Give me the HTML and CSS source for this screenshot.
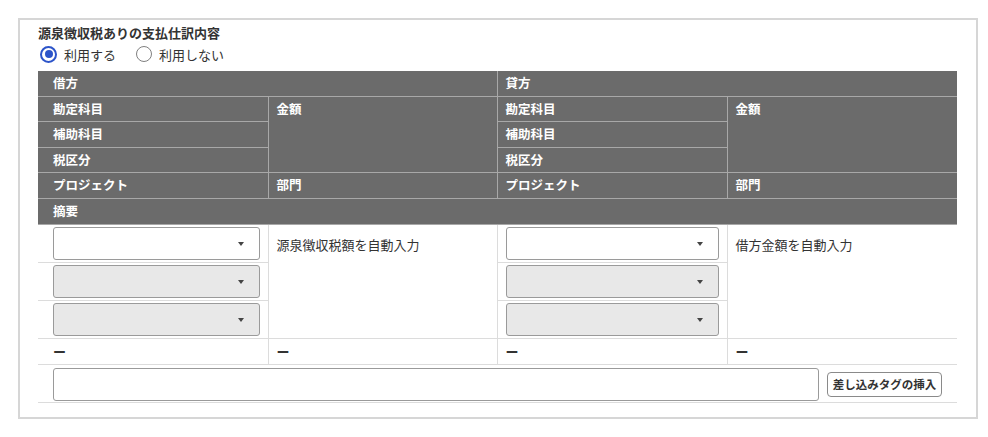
FILE: index.html
```html
<!DOCTYPE html>
<html lang="ja">
<head>
  <meta charset="UTF-8">
  <title>源泉徴収税ありの支払仕訳内容</title>
  <link rel="stylesheet" href="styles.css">
</head>
<body>
  <div class="panel">
    <div class="title">源泉徴収税ありの支払仕訳内容</div>
    <div class="radios">
      <label class="radio-item"><span class="radio checked"></span>利用する</label>
      <label class="radio-item"><span class="radio"></span>利用しない</label>
    </div>

    <table class="journal">
      <colgroup>
        <col style="width:230px">
        <col style="width:229px">
        <col style="width:230px">
        <col style="width:230px">
      </colgroup>
      <thead>
        <tr>
          <th colspan="2" class="first">借方</th>
          <th colspan="2" class="side">貸方</th>
        </tr>
        <tr>
          <th class="first">勘定科目</th>
          <th rowspan="3" class="side">金額</th>
          <th class="side">勘定科目</th>
          <th rowspan="3" class="side">金額</th>
        </tr>
        <tr>
          <th class="first">補助科目</th>
          <th class="side">補助科目</th>
        </tr>
        <tr>
          <th class="first">税区分</th>
          <th class="side">税区分</th>
        </tr>
        <tr>
          <th class="first">プロジェクト</th>
          <th class="side">部門</th>
          <th class="side">プロジェクト</th>
          <th class="side">部門</th>
        </tr>
        <tr>
          <th colspan="4" class="first">摘要</th>
        </tr>
      </thead>
      <tbody>
        <tr>
          <td class="first sel"><div class="select"></div></td>
          <td rowspan="3" class="side auto">源泉徴収税額を自動入力</td>
          <td class="side sel"><div class="select"></div></td>
          <td rowspan="3" class="side auto">借方金額を自動入力</td>
        </tr>
        <tr>
          <td class="first sel"><div class="select disabled"></div></td>
          <td class="side sel"><div class="select disabled"></div></td>
        </tr>
        <tr>
          <td class="first sel"><div class="select disabled"></div></td>
          <td class="side sel"><div class="select disabled"></div></td>
        </tr>
        <tr class="dash-row">
          <td class="first">ー</td>
          <td class="side">ー</td>
          <td class="side">ー</td>
          <td class="side">ー</td>
        </tr>
        <tr>
          <td colspan="4" class="memo">
            <div class="memo-line">
              <input type="text" class="memo-input">
              <button class="tag-btn">差し込みタグの挿入</button>
            </div>
          </td>
        </tr>
      </tbody>
    </table>
  </div>
</body>
</html>
```

FILE: styles.css
```css
body {
  margin: 0;
  padding: 18px 0 0 18px;
  font-family: "Noto Sans CJK JP", "Noto Sans", sans-serif;
  color: #333;
  background: #fff;
}
.panel {
  width: 922px;
  height: 376px;
  border: 2px solid #d6d6d6;
  padding: 3px 16px 18px 18px;
}
.title {
  font-size: 13px;
  font-weight: bold;
  line-height: 20px;
}
.radios {
  display: flex;
  align-items: center;
  gap: 18px;
  height: 22px;
  margin-bottom: 6px;
  font-size: 13px;
}
.radio-item {
  display: flex;
  align-items: center;
  gap: 7px;
  padding-left: 2px;
}
.radio {
  width: 14px;
  height: 14px;
  border: 1.5px solid #808080;
  border-radius: 50%;
  position: relative;
}
.radio.checked {
  border: 2px solid #2c54c9;
  width: 13px;
  height: 13px;
}
.radio.checked::after {
  content: "";
  position: absolute;
  left: 2.5px;
  top: 2.5px;
  width: 8px;
  height: 8px;
  border-radius: 50%;
  background: #2c54c9;
}
.journal {
  width: 919px;
  border-collapse: collapse;
  table-layout: fixed;
  font-size: 12.5px;
}
.journal th {
  background: #6b6b6b;
  color: #fff;
  font-weight: bold;
  text-align: left;
  vertical-align: top;
  height: 24.6px;
  line-height: 24px;
  padding: 0 8px;
  border-bottom: 1px solid #a8a8a8;
}
.journal th.side {
  border-left: 1px solid #a8a8a8;
}
.journal .first {
  padding-left: 15px;
}
.journal td {
  padding: 2px 8px;
  border-bottom: 1px solid #dcdcdc;
  vertical-align: top;
}
.journal td.side {
  border-left: 1px solid #dcdcdc;
}
.journal td.first {
  padding-left: 15px;
}
.journal td.auto {
  padding-top: 10px;
  font-size: 13px;
}
.select {
  height: 31px;
  border: 1px solid #9a9a9a;
  border-radius: 3px;
  background: #fff;
  position: relative;
}
.select.disabled {
  background: #e8e8e8;
}
.select::after {
  content: "";
  position: absolute;
  right: 15px;
  top: 14px;
  border-left: 3px solid transparent;
  border-right: 3px solid transparent;
  border-top: 4px solid #444;
}
.journal tr.dash-row td {
  height: 21px;
  line-height: 21px;
  font-size: 13px;
  font-weight: bold;
}
.journal td.memo {
  padding: 3px 15px 1px 15px;
}
.memo-line {
  display: flex;
  align-items: center;
  gap: 8px;
}
.memo-input {
  flex: 1;
  height: 33px;
  box-sizing: border-box;
  border: 1px solid #9a9a9a;
  border-radius: 3px;
  margin: 0;
}
.tag-btn {
  width: 115px;
  height: 25px;
  padding: 0;
  border: 1px solid #8a8a8a;
  border-radius: 4px;
  background: #fff;
  color: #333;
  font-family: inherit;
  font-size: 11.5px;
  font-weight: bold;
}
```
